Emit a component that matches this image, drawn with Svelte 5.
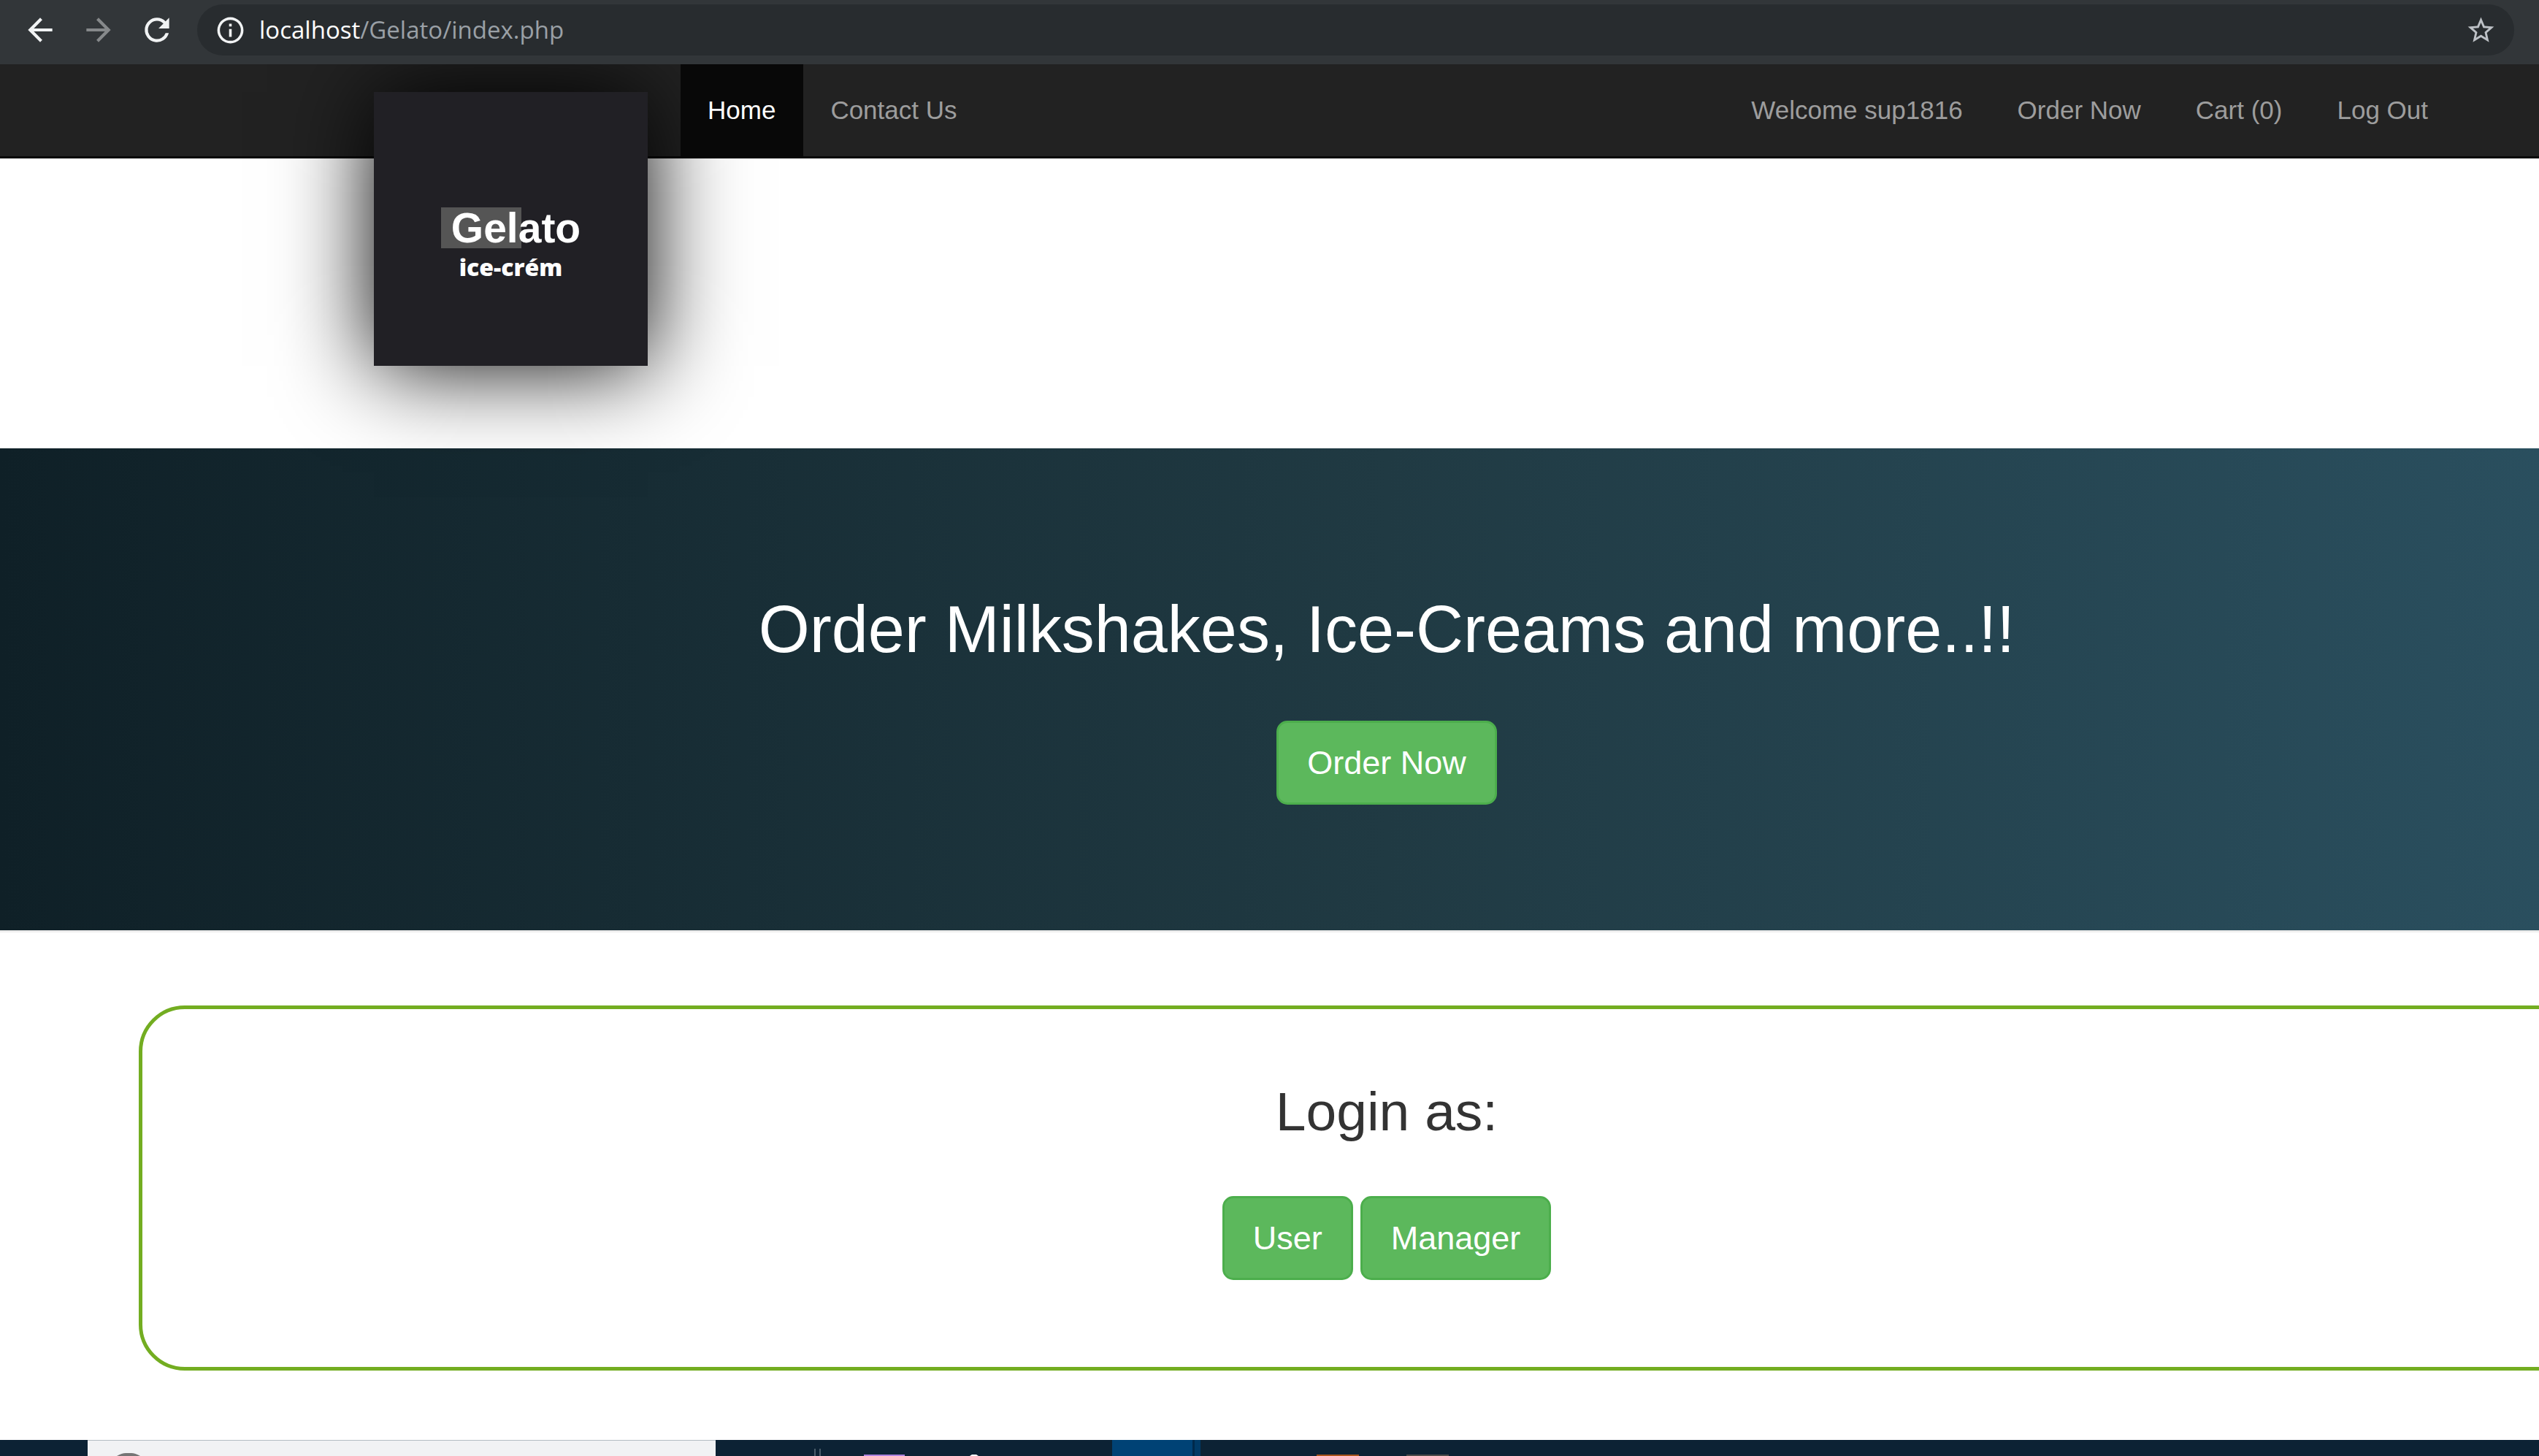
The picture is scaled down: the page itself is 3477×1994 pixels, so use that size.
<script>
  const accountLinks = ['Welcome sup1816', 'Order Now', 'Cart (0)', 'Log Out'];
</script>

<div class="window">
  <header class="browser">
    <button class="tool" aria-label="Back">
      <svg viewBox="0 0 24 24"><path d="M20 11H7.83l5.59-5.59L12 4l-8 8 8 8 1.41-1.41L7.83 13H20z" /></svg>
    </button>
    <button class="tool dim" aria-label="Forward">
      <svg viewBox="0 0 24 24"><path d="M4 11h12.17l-5.59-5.59L12 4l8 8-8 8-1.41-1.41L16.17 13H4z" /></svg>
    </button>
    <button class="tool" aria-label="Reload">
      <svg viewBox="0 0 24 24"><path d="M17.65 6.35A7.96 7.96 0 0 0 12 4a8 8 0 1 0 7.73 10h-2.08A6 6 0 1 1 12 6c1.66 0 3.14.69 4.22 1.78L13 11h7V4z" /></svg>
    </button>
    <div class="address">
      <svg class="small" viewBox="0 0 24 24"><path d="M11 17h2v-6h-2zm1-15a10 10 0 1 0 0 20 10 10 0 0 0 0-20zm0 18a8 8 0 1 1 0-16 8 8 0 0 1 0 16zM11 9h2V7h-2z" /></svg>
      <span class="url"><b>localhost</b>/Gelato/index.php</span>
      <button class="star" aria-label="Bookmark this page">
        <svg class="small" viewBox="0 0 24 24"><path d="M22 9.24l-7.19-.62L12 2 9.19 8.63 2 9.24l5.46 4.73L5.82 21 12 17.27 18.18 21l-1.63-7.03zM12 15.4l-3.76 2.27 1-4.28-3.32-2.88 4.38-.38L12 6.1l1.71 4.04 4.38.38-3.32 2.88 1 4.28z" /></svg>
      </button>
    </div>
  </header>

  <nav class="navbar">
    <div class="brand">
      <a class="logo" href="#home" aria-label="Gelato ice-crém">
        <span class="name">Gelato</span>
        <span class="tag">ice-crém</span>
      </a>
    </div>
    <a class="link active" href="#home">Home</a>
    <a class="link" href="#contact">Contact Us</a>
    <div class="account">
      {#each accountLinks as label}
        <a class="link" href="#account">{label}</a>
      {/each}
    </div>
  </nav>

  <main>
    <section class="hero">
      <h1>Order Milkshakes, Ice-Creams and more..!!</h1>
      <a class="btn" href="#order">Order Now</a>
    </section>
    <section class="login">
      <h2>Login as:</h2>
      <div class="choices">
        <a class="btn" href="#user">User</a>
        <a class="btn" href="#manager">Manager</a>
      </div>
    </section>
  </main>

  <footer class="taskbar">
    <div class="search"><svg viewBox="0 0 32 4"><path d="M0 4Q7 0 12 0h8q5 0 12 4z" fill="#757575" /></svg></div>
    <svg class="apps" viewBox="0 0 1020 22">
      <path d="M136 12v10M143 12v10" stroke="#4a5c6a" stroke-width="2" />
      <path d="M203 20h56v2h-56z" fill="#ab82dc" />
      <path d="M351 20h6l3 2h-12z" fill="#fff" />
      <path d="M543 0h110v22h-110z" fill="#004275" />
      <path d="M653 0h3v22h-3z" fill="#00294a" />
      <path d="M656 0h8v22h-8z" fill="#003a66" />
      <path d="M823 20h58v2h-58z" fill="#a8541c" />
      <path d="M946 20h58v2h-58z" fill="#4e4d4b" />
    </svg>
  </footer>
</div>

<style>
  :global(body) { margin: 0; background: #fff; }
  .window {
    min-height: 100vh;
    display: flex;
    flex-direction: column;
    overflow: hidden;
    font-family: "Liberation Sans", Arial, sans-serif;
  }
  svg { display: block; width: 50px; height: 50px; fill: currentColor; }
  a { text-decoration: none; }
  button { border: 0; padding: 0; background: none; color: inherit; }

  .browser {
    position: relative;
    z-index: 1;
    box-sizing: border-box;
    height: 88px;
    padding: 6px 34px 12px 30px;
    display: flex;
    align-items: center;
    gap: 30px;
    background: #323639;
    color: #f1f3f4;
  }
  .dim { color: #86898b; }
  .address {
    flex: 1;
    height: 70px;
    padding: 0 24px;
    display: flex;
    align-items: center;
    border-radius: 35px;
    background: #282c2f;
  }
  .small { width: 43px; height: 43px; }
  .url {
    flex: 1;
    margin-left: 18px;
    font-family: "Open Sans", "Noto Sans", sans-serif;
    font-size: 33px;
    line-height: 48px;
    color: #9aa0a6;
  }
  .url b { font-weight: 400; color: #fff; }
  .star { color: #bdc1c6; }

  .navbar {
    position: relative;
    display: flex;
    height: 126px;
    padding-right: 114px;
    background: #222;
    border-bottom: 3px solid #080808;
  }
  .brand { width: 932px; }
  .logo {
    position: absolute;
    top: 38px;
    left: 512px;
    width: 375px;
    height: 375px;
    box-sizing: border-box;
    padding-top: 158px;
    display: flex;
    flex-direction: column;
    align-items: center;
    background: #212025;
    box-shadow: 0 0 120px #000;
    color: #fff;
  }
  .name {
    padding-left: 14px;
    font-size: 57px;
    font-weight: 700;
    line-height: 56px;
    background: linear-gradient(#555, #555) left / 110px 100% no-repeat;
  }
  .tag {
    margin-top: 3px;
    font-family: "Open Sans", sans-serif;
    font-size: 32px;
    font-weight: 800;
    line-height: 46px;
  }
  .link {
    position: relative;
    padding: 0 38px 0 37px;
    font-size: 35px;
    line-height: 126px;
    color: #9d9d9d;
  }
  .active { background: #080808; color: #fff; }
  .account { display: flex; margin-left: auto; }

  .hero {
    margin-top: 397px;
    margin-right: -321px;
    padding: 199px 0 172px;
    display: flex;
    flex-direction: column;
    align-items: center;
    background: linear-gradient(to right, #0f2027, #203a43, #2c5364);
    border-bottom: 3px solid #eee;
  }
  h1, h2 { margin: 0; font-weight: 500; }
  h1 { font-size: 90px; line-height: 99px; color: #fff; }
  h2 { font-size: 75px; line-height: 83px; color: #333; }
  .btn {
    padding: 25px 39px;
    border: 3px solid #4cae4c;
    border-radius: 15px;
    background: #5cb85c;
    color: #fff;
    font-size: 45px;
    line-height: 59px;
  }
  .hero .btn { margin-top: 75px; }
  .login {
    margin: 100px -131px 0 190px;
    padding: 99px 0 119px;
    display: flex;
    flex-direction: column;
    align-items: center;
    gap: 74px;
    border: 5px solid #73ad21;
    border-radius: 63px;
  }
  .choices { display: flex; gap: 10px; }

  .taskbar {
    display: flex;
    height: 22px;
    margin-top: auto;
    padding-left: 120px;
    background: #0c2234;
  }
  .search {
    box-sizing: border-box;
    width: 860px;
    padding: 17px 0 0 40px;
    background: #f1f2f4;
    border-top: 1px solid #b4bcc2;
  }
  .search svg { width: 32px; height: 4px; }
  .apps { width: 1020px; height: 22px; }
</style>
